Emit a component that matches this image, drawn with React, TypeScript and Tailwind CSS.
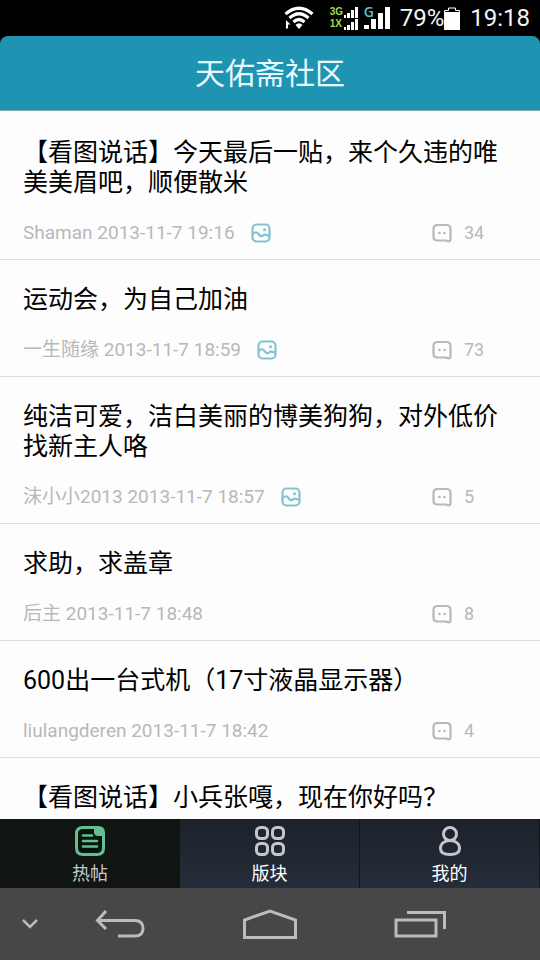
import React from 'react';

type Post = {
  id: number;
  title: string;
  author?: string;
  date?: string;
  replies?: number;
  hasImage?: boolean;
};

const posts: Post[] = [
  { id: 1, title: '【看图说话】今天最后一贴，来个久违的唯美美眉吧，顺便散米', author: 'Shaman', date: '2013-11-7 19:16', replies: 34, hasImage: true },
  { id: 2, title: '运动会，为自己加油', author: '一生随缘', date: '2013-11-7 18:59', replies: 73, hasImage: true },
  { id: 3, title: '纯洁可爱，洁白美丽的博美狗狗，对外低价找新主人咯', author: '沫小小2013', date: '2013-11-7 18:57', replies: 5, hasImage: true },
  { id: 4, title: '求助，求盖章', author: '后主', date: '2013-11-7 18:48', replies: 8 },
  { id: 5, title: '600出一台式机（17寸液晶显示器）', author: 'liulangderen', date: '2013-11-7 18:42', replies: 4 },
  { id: 6, title: '【看图说话】小兵张嘎，现在你好吗？' },
];

const WifiIcon = () => (
  <svg width="30" height="24" viewBox="0 0 30 24" fill="none" stroke="#fff" strokeWidth="3.2">
    <path d="M1.500 8 Q15 -3.500 28.500 8" />
    <path d="M5.500 12 Q15 3.500 24.500 12" />
    <path d="M9.500 16 Q15 11 20.500 16" />
    <path d="M11.500 19 Q15 15.500 18.500 19 L15 23 Z" fill="#fff" stroke="none" />
    <path d="M2 14 L6.500 18.500 L4 18.500 L4 22 L2 23 Z" fill="#fff" stroke="none" />
  </svg>
);

const SmallBars = () => (
  <svg width="14" height="11" viewBox="0 0 14 11" fill="#fff">
    <rect x="0" y="8" width="2" height="3" />
    <rect x="3" y="6" width="3" height="5" />
    <rect x="7" y="3" width="3" height="8" />
    <rect x="11" y="0" width="3" height="11" />
  </svg>
);

const SignalIcon = () => (
  <svg width="26" height="24" viewBox="0 0 26 24" fill="#fff">
    <rect x="0" y="19" width="5" height="4" />
    <rect x="7" y="13" width="5" height="10" />
    <rect x="14" y="7" width="5" height="16" />
    <rect x="21" y="1" width="5" height="22" />
  </svg>
);

const BatteryIcon = () => (
  <svg width="16" height="23" viewBox="0 0 16 23" fill="none" stroke="#fff">
    <path d="M0.500 22 V3.500 H4.500 V1 H11.500 V3.500 H15.500 V22" />
    <rect x="0" y="5" width="16" height="18" fill="#fff" stroke="none" />
  </svg>
);

const PictureIcon = () => (
  <svg width="20" height="20" viewBox="0 0 20 20" fill="none" stroke="#83c3d1" strokeWidth="2.200" strokeLinejoin="round">
    <rect x="1.500" y="1.500" width="17" height="17" rx="4" />
    <path d="M2 11 Q5 7.500 7.500 11 T12 12.500 Q14 10.500 18 13" />
    <circle cx="13.500" cy="6.800" r="1.500" fill="#83c3d1" stroke="none" />
  </svg>
);

const ReplyIcon = () => (
  <svg width="20" height="20" viewBox="0 0 20 20" fill="none" stroke="#b8b8b8" strokeWidth="2.200" strokeLinejoin="round">
    <path d="M5.500 2 H14.500 Q18.500 2 18.500 6 V16 Q18.500 18.500 16.500 18.500 L14 17.500 H5.500 Q1.500 17.500 1.500 13.500 V6 Q1.500 2 5.500 2 Z" />
    <circle cx="7.500" cy="10" r="1.300" fill="#b8b8b8" stroke="none" />
    <circle cx="12.500" cy="10" r="1.300" fill="#b8b8b8" stroke="none" />
  </svg>
);

const HotIcon = () => (
  <svg width="30" height="30" viewBox="0 0 30 30" fill="none" stroke="#66bd92" strokeWidth="3">
    <path d="M20 1.500 H8 Q1.500 1.500 1.500 8 V22 Q1.500 28.500 8 28.500 H22 Q28.500 28.500 28.500 22 V9" fill="#05170d" />
    <path d="M19 0 H23 Q30 0 30 7 V10 H23 Q19 10 19 6 Z" fill="#66bd92" stroke="none" />
    <path d="M8 9.500 H17 M8 15 H22 M8 20.500 H22" strokeWidth="2.500" strokeLinecap="round" />
  </svg>
);

const BoardIcon = () => (
  <svg width="30" height="30" viewBox="0 0 30 30" fill="none" stroke="#c4c6c9" strokeWidth="3">
    <rect x="1.500" y="1.500" width="11" height="11" rx="4" />
    <rect x="17.500" y="1.500" width="11" height="11" rx="4" />
    <rect x="1.500" y="17.500" width="11" height="11" rx="4" />
    <rect x="17.500" y="17.500" width="11" height="11" rx="4" />
  </svg>
);

const MineIcon = () => (
  <svg width="30" height="30" viewBox="0 0 30 30" fill="none" stroke="#c4c6c9" strokeWidth="3">
    <circle cx="15" cy="8" r="6.500" />
    <path d="M15 14.500 C21 14.500 24.500 18 24.500 22.500 C24.500 27 21 28.500 15 28.500 C9 28.500 5.500 27 5.500 22.500 C5.500 18 9 14.500 15 14.500 Z" />
  </svg>
);

const StatusBar = () => (
  <div className="flex h-9 shrink-0 items-center justify-end bg-black pr-2.5 text-2xl text-gray-100">
    <WifiIcon />
    <div className="ml-4 flex flex-col font-['Liberation_Sans'] text-[10px] leading-3 font-bold text-[#a4dc46]">
      <div className="flex items-center">
        <span className="w-3.5">3G</span>
        <SmallBars />
      </div>
      <div className="flex items-center">
        <span className="w-3.5">1X</span>
        <SmallBars />
      </div>
    </div>
    <div className="relative ml-1.5">
      <SignalIcon />
      <span className="absolute top-0 left-0 font-['Open_Sans'] text-sm leading-3 font-semibold text-[#4fc3dc]">G</span>
    </div>
    <span className="ml-2.5">79%</span>
    <BatteryIcon />
    <span className="ml-2.5">19:18</span>
  </div>
);

const PostItem: React.FC<{ post: Post }> = ({ post }) => (
  <li className="border-b border-[#dedede] px-[23px] pt-[25px] pb-3.5">
    <a href={`#post-${post.id}`} className="block">
      <h2 className="text-[25px] leading-[30px] text-black">{post.title}</h2>
      {post.author && (
        <div className="mt-[23px] flex items-center text-[19px] leading-6 text-[#b8b8b8]">
          <span className="mr-4">
            {post.author} {post.date}
          </span>
          {post.hasImage && <PictureIcon />}
          <span className="ml-auto flex w-[85px] items-center gap-3 text-lg leading-6">
            <ReplyIcon />
            {post.replies}
          </span>
        </div>
      )}
    </a>
  </li>
);

const tabs = [
  { label: '热帖', Icon: HotIcon },
  { label: '版块', Icon: BoardIcon },
  { label: '我的', Icon: MineIcon },
];

const TabBar = () => {
  const [active, setActive] = React.useState(0);

  return (
    <nav className="grid shrink-0 grid-cols-3 bg-[#202832]">
      {tabs.map(({ label, Icon }, i) => (
        <button
          key={label}
          type="button"
          onClick={() => setActive(i)}
          className={
            i === active
              ? 'flex flex-col items-center gap-1 bg-[#101413] pt-[7px] text-lg leading-7 text-[#c8c8c8]'
              : 'flex flex-col items-center gap-1 border-r border-[#11161d] bg-linear-to-b from-[#1c222a] to-[#242d3a] pt-[7px] text-lg leading-7 text-white'
          }
        >
          <Icon />
          {label}
        </button>
      ))}
    </nav>
  );
};

const SystemBar = () => (
  <div className="grid h-[72px] shrink-0 grid-cols-[1fr_2fr_3fr_2fr_1fr] bg-[#474747]">
    <button type="button" aria-label="收起" className="flex items-center justify-center">
      <svg width="16" height="12" viewBox="0 0 16 12" fill="none" stroke="#bcbcbc" strokeWidth="2.500">
        <path d="M1 2 L8 9 L15 2" />
      </svg>
    </button>
    <button type="button" aria-label="返回" className="flex items-center justify-center">
      <svg width="50" height="28" viewBox="0 0 50 28" fill="none" stroke="#bcbcbc" strokeWidth="3">
        <path d="M11 1 L2.500 10.500 L11 19" />
        <path d="M3 10.500 H40 Q48 10.500 48 18.500 Q48 26 40 26 H23" />
      </svg>
    </button>
    <button type="button" aria-label="主页" className="flex items-center justify-center">
      <svg width="54" height="30" viewBox="0 0 54 30" fill="none" stroke="#bcbcbc" strokeWidth="3">
        <path d="M1.500 28.500 V11 L27 2 L52.500 11 V28.500 Z" />
      </svg>
    </button>
    <button type="button" aria-label="最近任务" className="flex items-center justify-center">
      <svg width="52" height="28" viewBox="0 0 52 28" fill="none" stroke="#bcbcbc" strokeWidth="3">
        <rect x="2" y="10" width="40" height="16" />
        <path d="M13 2.500 H50.500 V19" />
      </svg>
    </button>
  </div>
);

const App: React.FC = () => {
  return (
    <div className="flex h-screen flex-col overflow-hidden bg-black font-['Roboto','Noto_Sans_CJK_SC',sans-serif]">
      <StatusBar />
      <header className="shrink-0 rounded-t-lg border-b border-[#8aa9b0] bg-[#1f93b2] pt-[18px] pb-4 text-center">
        <h1 className="text-3xl leading-10 text-[#e6fbff]">天佑斋社区</h1>
      </header>
      <main className="min-h-0 flex-1 overflow-hidden bg-[#fdfdfd] pt-0.5">
        <ul>
          {posts.map((post) => (
            <PostItem key={post.id} post={post} />
          ))}
        </ul>
      </main>
      <TabBar />
      <SystemBar />
    </div>
  );
};

export default App;
